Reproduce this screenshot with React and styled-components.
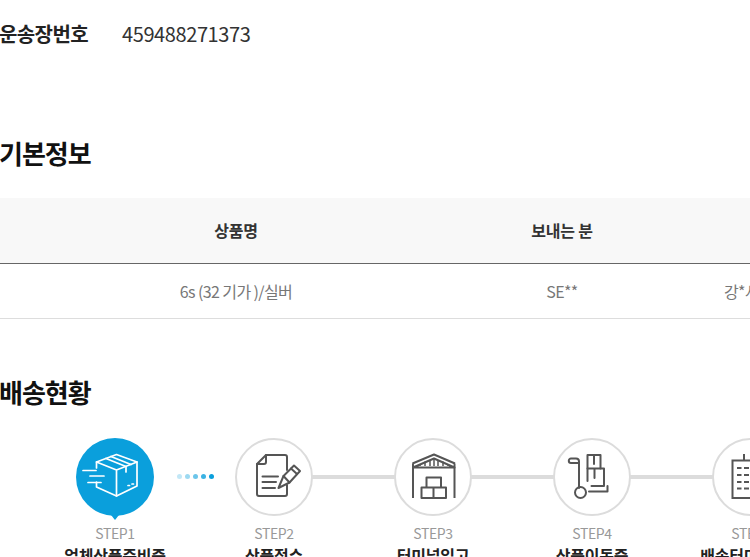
import React from "react";
import styled, { createGlobalStyle } from "styled-components";

const Global = createGlobalStyle`
  html, body { margin: 0; padding: 0; width: 750px; height: 557px; overflow: hidden; background: #fff; }
  body { font-family: "Noto Sans CJK KR", "Noto Sans", sans-serif; color: #222; }
  * { box-sizing: border-box; }
`;

const Page = styled.main`
  width: 1000px;
`;

const InvoiceRow = styled.div`
  display: flex;
  align-items: center;
  height: 70px;
  padding-bottom: 4px;
  font-size: 20px;
  letter-spacing: -0.4px;
`;

const InvoiceLabel = styled.strong`
  width: 123px;
  margin-left: -1px;
  font-weight: 700;
  letter-spacing: -0.6px;
  color: #222;
  flex: none;
`;

const InvoiceNumber = styled.span`
  color: #333;
  font-weight: 400;
`;

const Heading = styled.h2`
  margin: ${(p) => p.$top}px 0 0 -1px;
  height: 36px;
  line-height: 36px;
  font-size: 26px;
  font-weight: 700;
  letter-spacing: -1px;
  color: #111;
`;

const Table = styled.table`
  table-layout: fixed;
  width: 910px;
  margin-top: 27px;
  border-collapse: collapse;
  border-spacing: 0;
`;

const HeadCell = styled.th`
  height: 65px;
  padding: 0;
  background: #f8f8f8;
  border-bottom: 1px solid #666;
  font-size: 16px;
  font-weight: 700;
  letter-spacing: -0.2px;
  color: #333;
  text-align: center;
`;

const BodyCell = styled.td`
  height: 55px;
  padding: 0 0 0 ${(p) => p.$pad || 0}px;
  border-bottom: 1px solid #ddd;
  font-size: 16px;
  letter-spacing: -0.6px;
  color: #777;
  text-align: ${(p) => p.$align || "center"};
`;

const Track = styled.ol`
  display: flex;
  list-style: none;
  margin: 28px 0 0 35.5px;
  padding: 0;
`;

const Step = styled.li`
  position: relative;
  flex: none;
  width: 159px;
  display: flex;
  flex-direction: column;
  align-items: center;
  &::before {
    content: "";
    display: ${(p) => (p.$line ? "block" : "none")};
    position: absolute;
    top: 37px;
    left: -80px;
    width: 159px;
    height: 4px;
    background: #dcdcdc;
  }
`;

const Circle = styled.div`
  position: relative;
  z-index: 1;
  width: 78px;
  height: 78px;
  border-radius: 50%;
  background: ${(p) => (p.$active ? "#0a9fdc" : "#fff")};
  border: ${(p) => (p.$active ? "none" : "2px solid #dcdcdc")};
  color: ${(p) => (p.$active ? "#fff" : "#555")};
  display: flex;
  align-items: center;
  justify-content: center;
  &::after {
    content: "";
    display: ${(p) => (p.$active ? "block" : "none")};
    position: absolute;
    left: 35px;
    bottom: -4px;
    border-left: 4px solid transparent;
    border-right: 4px solid transparent;
    border-top: 5px solid #0a9fdc;
  }
`;

const Icon = styled.svg`
  flex: none;
  fill: none;
  stroke: currentColor;
  stroke-width: ${(p) => p.$w || 2};
  margin: ${(p) => (p.$inset ? "-2px" : "0")};
`;

const Dots = styled.div`
  position: absolute;
  top: 36px;
  left: 141px;
  display: flex;
  gap: 3px;
`;

const Dot = styled.i`
  display: block;
  width: 5px;
  height: 5px;
  border-radius: 50%;
  background: #0a9fdc;
`;

const StepNo = styled.span`
  margin-top: 7px;
  font-size: 14px;
  line-height: 20px;
  letter-spacing: -0.4px;
  color: #999;
`;

const StepName = styled.strong`
  font-size: 16px;
  line-height: 24px;
  font-weight: 700;
  letter-spacing: -0.2px;
  color: #222;
  white-space: nowrap;
`;

const BoxIcon = () => (
  <Icon width="78" height="78" viewBox="0 0 78 78" $w={1.7} strokeLinejoin="round" strokeLinecap="round">
    <path d="M20.5 30V24L40.5 16.5L61 24V48L40.5 58L20.5 49V44" />
    <path d="M20.5 24L40.5 32L61 24M40.5 32V58" />
    <path d="M30 20.5L50 28.5V34M35 18.5L55 26.5" />
    <path d="M7 32.5H20M14 38H28M12 44.5H25" />
    <path d="M52 47.5h1.5M56 46h1.5" />
  </Icon>
);

const DocIcon = () => (
  <Icon $inset width="78" height="78" viewBox="0 0 78 78" strokeLinejoin="round" strokeLinecap="round">
    <path d="M52 32V19a2 2 0 0 0-2-2H31L22 26V56a2 2 0 0 0 2 2H50a2 2 0 0 0 2-2V47" />
    <path d="M31 17V24a2 2 0 0 1-2 2H22" />
    <path d="M27.5 38.5H43M27.5 44H41M27.5 50H40" />
    <path d="M43.5 50L48.5 38L59 27.5L65 33L54.5 44.5Z" />
    <path d="M56 30.5L62 36M48.5 38L54.5 44.5" />
  </Icon>
);

const WarehouseIcon = () => (
  <Icon $inset width="78" height="78" viewBox="0 0 78 78" strokeLinejoin="round">
    <path d="M18.5 25.5L40 16.5L61 25.5M19 60V25.5M60.5 60V25.5" />
    <path d="M19 29.5L40 20.5L60.5 29.5H19Z" />
    <path d="M26 28V26M31 28V23.5M36 28V22M40 28V20.5M44 28V22M49 28V23.5M54 28V26" strokeWidth="1.5" />
    <path d="M32.5 49.5V39.5H47V49.5" />
    <path d="M27.5 49.5H52V60H27.5ZM39.5 49.5V60" />
  </Icon>
);

const CartIcon = () => (
  <Icon $inset width="78" height="78" viewBox="0 0 78 78" strokeLinejoin="round" strokeLinecap="round">
    <path d="M26 50V23.5a3 3 0 0 0-3-3H18a2.2 2.2 0 0 0 0 4.4h8" />
    <circle cx="27.5" cy="54.5" r="5.5" />
    <path d="M36 53.5H54.5V48" />
    <path d="M34.5 30.5V17H47.5V30.5M41 17V26" />
    <path d="M34.5 43V30.5H51V48H38.5M41.5 30.5V40" />
  </Icon>
);

const CalendarIcon = () => (
  <Icon $inset width="78" height="78" viewBox="0 0 78 78">
    <path d="M20.5 22.5H58V60H20.5Z" />
    <path d="M32 16V22M46 16V22" />
    <path d="M25 30H29.5M32 30H37M41 30H46M49 30H54M25 37H29.5M32 37H37M41 37H46M49 37H54M25 44H29.5M32 44H37M41 44H46M49 44H54M25 50.5H29.5M32 50.5H37M41 50.5H46M49 50.5H54" />
  </Icon>
);

const steps = [
  { name: "업체상품준비중", icon: <BoxIcon />, active: true },
  { name: "상품접수", icon: <DocIcon /> },
  { name: "터미널입고", icon: <WarehouseIcon />, line: true },
  { name: "상품이동중", icon: <CartIcon />, line: true },
  { name: "배송터미널도착", icon: <CalendarIcon />, line: true },
];

const dotOpacity = [0.25, 0.4, 0.6, 0.8, 1];

export default function App() {
  return (
    <Page>
      <Global />
      <InvoiceRow>
        <InvoiceLabel>운송장번호</InvoiceLabel>
        <InvoiceNumber>459488271373</InvoiceNumber>
      </InvoiceRow>

      <Heading $top={65}>기본정보</Heading>
      <Table>
        <colgroup>
          <col width="472" />
          <col width="180" />
          <col width="258" />
        </colgroup>
        <thead>
          <tr>
            <HeadCell>상품명</HeadCell>
            <HeadCell>보내는 분</HeadCell>
            <HeadCell>받는 분</HeadCell>
          </tr>
        </thead>
        <tbody>
          <tr>
            <BodyCell>6s (32 기가 )/실버</BodyCell>
            <BodyCell>SE**</BodyCell>
            <BodyCell $align="left" $pad={72}>강*사</BodyCell>
          </tr>
        </tbody>
      </Table>

      <Heading $top={55}>배송현황</Heading>
      <Track>
        {steps.map((s, i) => (
          <Step key={s.name} $line={s.line}>
            <Circle $active={s.active}>{s.icon}</Circle>
            {s.active && (
              <Dots>
                {dotOpacity.map((o) => (
                  <Dot key={o} style={{ opacity: o }} />
                ))}
              </Dots>
            )}
            <StepNo>STEP{i + 1}</StepNo>
            <StepName>{s.name}</StepName>
          </Step>
        ))}
      </Track>
    </Page>
  );
}
